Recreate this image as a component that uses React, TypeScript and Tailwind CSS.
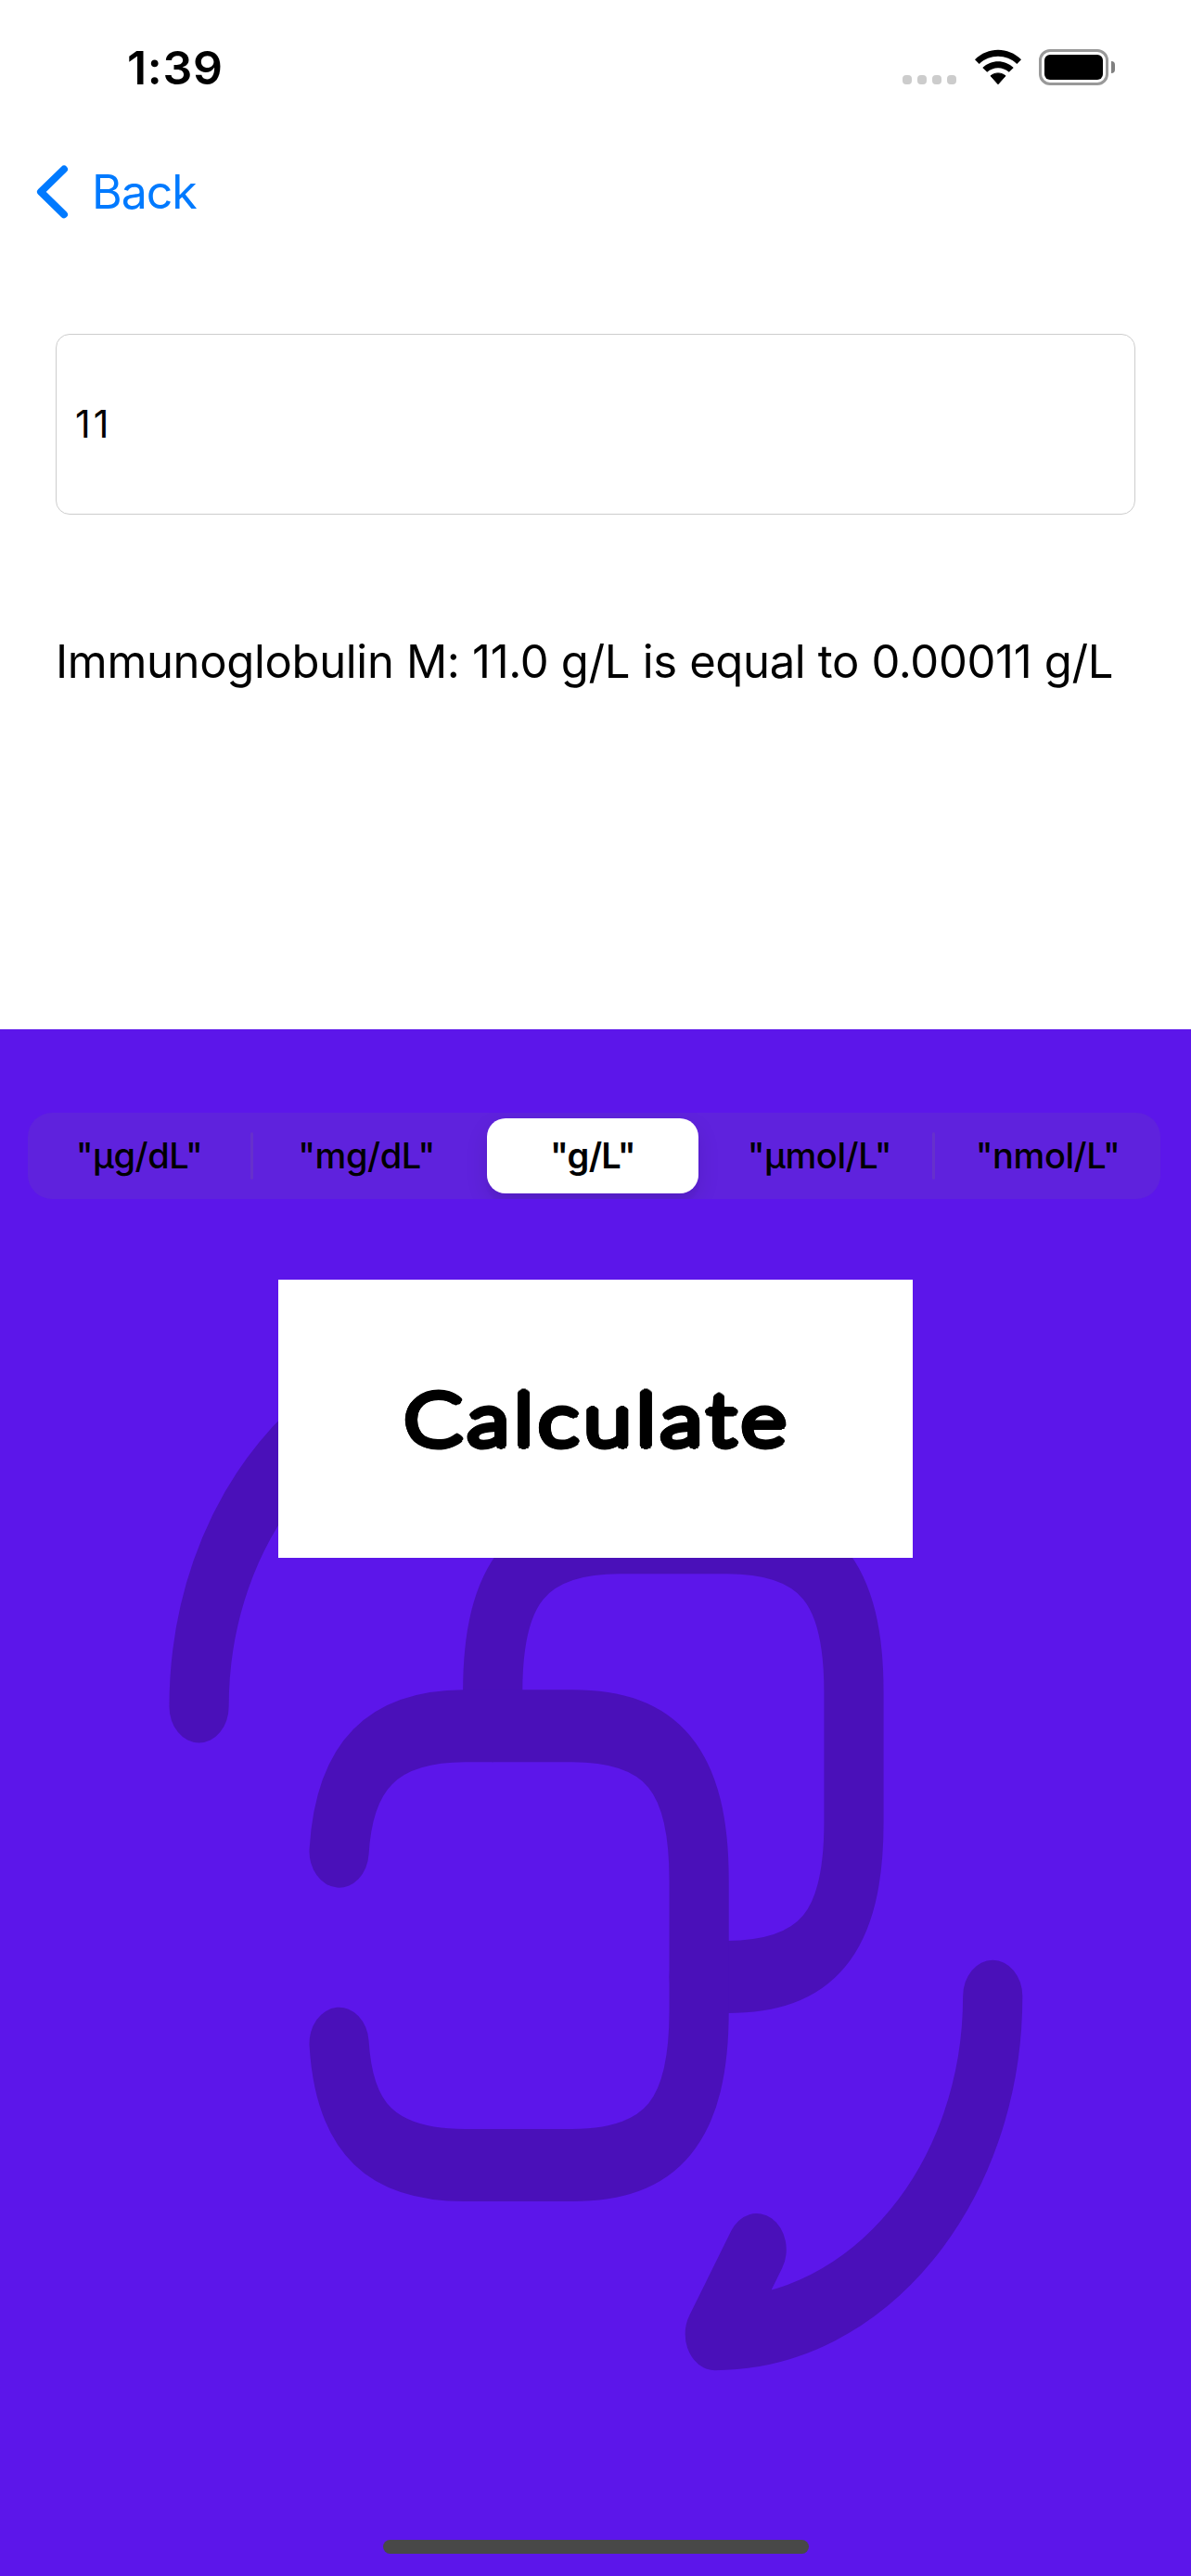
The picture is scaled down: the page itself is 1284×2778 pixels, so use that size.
import React from "react";

function StatusBar() {
  return (
    <header className="flex h-[147px] items-start justify-between pl-[137px] pr-[82px]">
      <time className="mt-[43px] text-[50px] font-semibold leading-[60px] tracking-[0.7px]">1:39</time>
      <div className="mt-[53px] flex h-[39px] items-start">
        <div className="mt-[28px] flex gap-[6px]">
          {[0, 1, 2, 3].map((i) => (
            <span key={i} className="size-[10px] rounded-[4px] bg-[#cccccc]" />
          ))}
        </div>
        <svg className="ml-[19px] h-[39px] w-[52px]" viewBox="0 0 52 39">
          <path d="M1 11.2C15-2.8 37-2.8 51 11.2L46.3 15.9C35 5 17 5 5.7 15.9Z" fill="#000" />
          <path d="M9.3 20C18.7 11 33.3 11 42.7 20L37.8 24.8C31 18.6 21 18.6 14.2 24.8Z" fill="#000" />
          <path d="M18 28.8C22.5 25 29.5 25 34 28.8L26 37.8Z" fill="#000" stroke="#000" strokeWidth="1" strokeLinejoin="round" />
        </svg>
        <div className="ml-[18px] h-[39px] w-[75px] rounded-[12px] border-3 border-[#999999] p-[3px]">
          <div className="h-full w-full rounded-[6px] bg-black" />
        </div>
        <div className="ml-[3px] mt-[13px] h-[13px] w-[4px] rounded-r-full bg-[#808080]" />
      </div>
    </header>
  );
}

function BackLink() {
  return (
    <nav className="flex h-[120px] items-center pl-[36px] text-[#007aff]">
      <svg className="h-[64px] w-[40px]" viewBox="0 0 40 64" fill="none">
        <path d="M33 7.5L8 31.9L33 56.3" stroke="currentColor" strokeWidth="8" strokeLinecap="round" strokeLinejoin="round" />
      </svg>
      <span className="ml-[23px] text-[50px] leading-[60px] tracking-[-1px]">Back</span>
    </nav>
  );
}

function ConvertWatermark() {
  return (
    <svg
      className="absolute left-[128.7px] top-[261.7px] h-[1249.2px] w-[1026.8px]"
      viewBox="0 0 24 24"
      preserveAspectRatio="none"
      fill="none"
      stroke="#4a10b9"
      strokeWidth="1.5"
      strokeLinecap="round"
      strokeLinejoin="round"
    >
      <path d="M22 15c0 3.87-3.13 7-7 7l1.05-1.75" />
      <path d="M2 9c0-3.87 3.13-7 7-7L7.95 3.75" />
      <path d="M9.4 9.4V8.7c0-2.28.92-3.2 3.2-3.2h2.7c2.28 0 3.2.92 3.2 3.2v2.7c0 2.28-.92 3.2-3.2 3.2h-.7" />
      <path d="M5.53 15.98c.13 1.77 1.08 2.52 3.17 2.52h2.7c2.28 0 3.2-.92 3.2-3.2v-2.7c0-2.28-.92-3.2-3.2-3.2H8.7c-2.09 0-3.04.83-3.17 2.6" />
    </svg>
  );
}

const Divider = () => <span className="mt-[21px] h-[51px] w-[3px] shrink-0 rounded-full bg-[#6630cc]" />;

function UnitPicker() {
  return (
    <div className="relative mt-[90px] ml-[30px] flex h-[93px] w-[1221px] overflow-hidden rounded-[26px] bg-[#5f22dd] text-[38px] font-medium leading-[93px] tracking-[-0.4px]">
      <button className="w-[240px]">"μg/dL"</button>
      <Divider />
      <button className="w-[244px]">"mg/dL"</button>
      <button className="mt-[6px] mr-[9px] ml-[8px] h-[81px] w-[228px] rounded-[20px] bg-white font-semibold leading-[81px] tracking-[-0.7px] shadow-[0_9px_24px_rgba(0,0,0,0.10),0_9px_3px_rgba(0,0,0,0.03)]">
        "g/L"
      </button>
      <button className="w-[243px]">"μmol/L"</button>
      <Divider />
      <button className="w-[243px]">"nmol/L"</button>
    </div>
  );
}

export default function App() {
  return (
    <div className="flex h-[2778px] w-[1284px] flex-col overflow-hidden bg-white font-['Inter',sans-serif] text-black">
      <StatusBar />
      <BackLink />
      <main className="flex flex-1 flex-col">
        <section className="flex h-[843px] flex-col px-[60px] pt-[93px]">
          <div className="flex h-[195px] w-[1164px] items-center rounded-[15px] border border-[#cdcdcd] px-[20px] text-[41px] tracking-[3px]">
            11
          </div>
          <p className="mt-[129px] whitespace-nowrap text-[49px] leading-[60px] tracking-[-0.34px]">
            Immunoglobulin M: 11.0 g/L is equal to 0.00011 g/L
          </p>
        </section>
        <section className="relative flex flex-1 flex-col bg-[#5c16ea]">
          <ConvertWatermark />
          <UnitPicker />
          <button className="relative mt-[87px] ml-[300px] flex h-[300px] w-[684px] items-center justify-center bg-white pb-[2px] font-['Lato',sans-serif] text-[79px] font-light">
            <span className="inline-block scale-x-118 pl-[4px] tracking-[4.5px] [-webkit-text-stroke:3px_black] [text-shadow:3.6px_0_#000,3.3px_1.4px_#000,2.5px_2.5px_#000,1.4px_3.3px_#000,0_3.6px_#000,-1.4px_3.3px_#000,-2.5px_2.5px_#000,-3.3px_1.4px_#000,-3.6px_0_#000,-3.3px_-1.4px_#000,-2.5px_-2.5px_#000,-1.4px_-3.3px_#000,0_-3.6px_#000,1.4px_-3.3px_#000,2.5px_-2.5px_#000,3.3px_-1.4px_#000]">
              Calculate
            </span>
          </button>
          <div className="mt-auto mb-[24px] ml-[413px] h-[15px] w-[459px] rounded-full bg-[#484848]" />
        </section>
      </main>
    </div>
  );
}
